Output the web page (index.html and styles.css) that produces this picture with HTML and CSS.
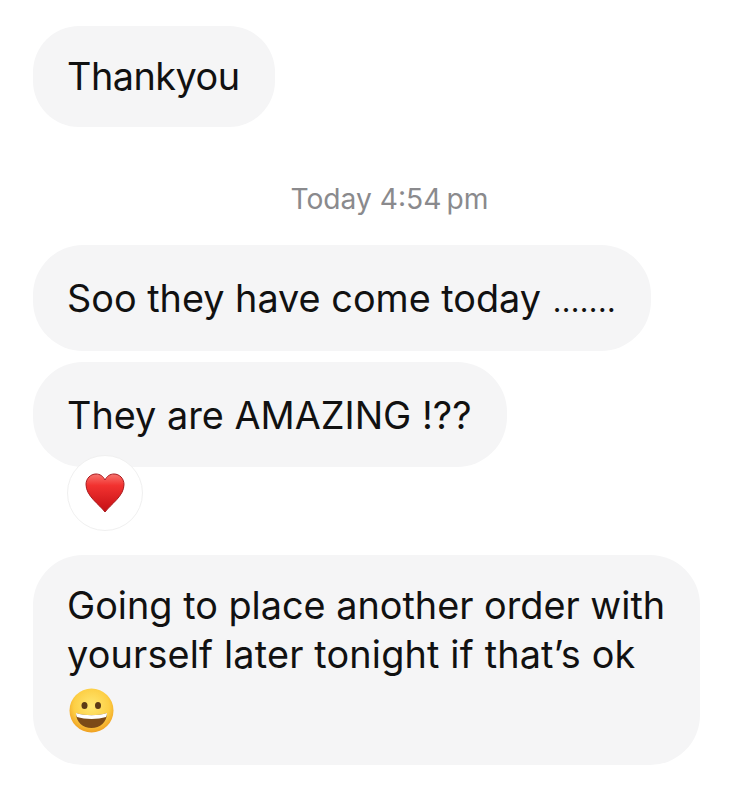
FILE: index.html
```html
<!DOCTYPE html>
<html lang="en">
<head>
<meta charset="utf-8">
<title>Messages</title>
<link rel="stylesheet" href="styles.css">
</head>
<body>
<main class="thread">
  <div class="bubble first"><span>Thankyou</span></div>
  <div class="time">Today 4:54&#8201;pm</div>
  <div class="bubble second"><span>Soo they have come today</span> <span class="dots">.......</span></div>
  <div class="bubble third"><span>They are AMAZING !??</span></div>
  <div class="reaction">
    <svg viewBox="0 0 40 40" width="40" height="40" aria-hidden="true">
      <defs>
        <linearGradient id="hg" x1="0" y1="0" x2="0" y2="1">
          <stop offset="0" stop-color="#f7746e"/>
          <stop offset=".3" stop-color="#f23230"/>
          <stop offset="1" stop-color="#c40f14"/>
        </linearGradient>
      </defs>
      <path d="M20 39C14 31 1 23 1 11.500C1 5.500 5.500 1 11 1c4 0 7.200 2.200 9 6C21.800 3.200 25 1 29 1c5.500 0 10 4.500 10 10.500C39 23 26 31 20 39Z" fill="url(#hg)" stroke="#a81a1e" stroke-width="1"/>
    </svg>
  </div>
  <div class="bubble fourth">
    <p>Going to place another order with<br><span class="later">yourself later tonight if that’s ok</span></p>
    <svg class="smile" viewBox="0 0 45 45" width="45" height="45" aria-hidden="true">
      <defs>
        <radialGradient id="fg" cx=".5" cy=".4" r=".62">
          <stop offset="0" stop-color="#ffe873"/>
          <stop offset=".65" stop-color="#fdcf45"/>
          <stop offset="1" stop-color="#ee9a1c"/>
        </radialGradient>
      </defs>
      <circle cx="22.500" cy="22.500" r="22" fill="url(#fg)"/>
      <ellipse cx="15.500" cy="17.500" rx="3" ry="3.500" fill="#5b3a16"/>
      <ellipse cx="29" cy="17.500" rx="3" ry="3.500" fill="#5b3a16"/>
      <path d="M7 25c9 3 22 3 31 0c0 9-7 15-15.500 15S7 34 7 25Z" fill="#7c4a17"/>
      <path d="M7 25c9 3 22 3 31 0c0 1.500-.5 3-1 4c-8 2.500-21 2.500-29 0C7.500 28 7 26.500 7 25Z" fill="#fff"/>
    </svg>
  </div>
</main>
</body>
</html>
```
FILE: styles.css
```css
* { box-sizing: border-box; }
html, body { margin: 0; padding: 0; background: #fff; }
body { width: 742px; height: 797px; overflow: hidden; font-family: Inter, "Liberation Sans", Arial, sans-serif; color: #111; }
.thread { display: flex; flex-direction: column; align-items: flex-start; padding: 26px 42px 0 33px; }
.bubble { background: #f5f5f6; font-size: 37.800px; line-height: 49px; white-space: nowrap; }
.first { width: 242px; height: 101px; border-radius: 46px; padding: 26px 34px; letter-spacing: -.5px; }
.time { align-self: stretch; text-align: center; margin: 56px 0 29px; padding-left: 46px; height: 33px; font-size: 28.200px; line-height: 32px; color: #8a8a8d; }
.second { width: 618px; height: 106px; border-radius: 50px; padding: 29px 34px; }
.dots { font-size: 30px; letter-spacing: .4px; margin-left: 1px; }
.third { width: 474px; height: 105px; border-radius: 50px; padding: 29px 34px; margin-top: 11px; }
.reaction { width: 76px; height: 76px; margin: -12px 0 0 34px; border-radius: 50%; background: #fff; border: 1px solid #f0f0f0; display: flex; align-items: center; justify-content: center; position: relative; }
.fourth { width: 667px; height: 210px; border-radius: 50px; padding: 26px 34px; margin-top: 24px; }
.fourth p { margin: 0; }
.later { letter-spacing: .17px; }
.smile { display: block; margin: 9px 0 0 2px; }
```
